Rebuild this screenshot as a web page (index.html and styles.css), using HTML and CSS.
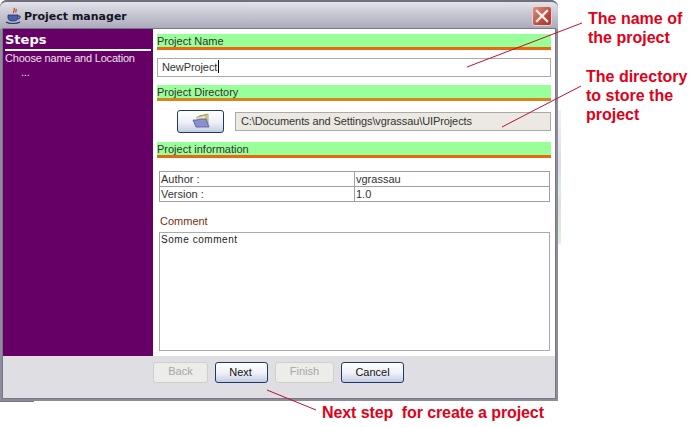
FILE: index.html
```html
<!DOCTYPE html>
<html lang="en">
<head>
<meta charset="UTF-8">
<meta name="viewport" content="width=device-width, initial-scale=1.0">
<title>Project manager</title>
<link rel="stylesheet" href="styles.css">
</head>
<body>

<div class="window">
    <div class="titlebar">
        <svg class="app-icon" width="18" height="18" viewBox="0 0 18 18">
            <path d="M9 1c2 2-2 3 0 5M11 2c1 1.500-1 2 0 3.500" fill="none" stroke="#c8431e" stroke-width="1.200"/>
            <path d="M3 8h10v3c0 2-2 3-5 3s-5-1-5-3z" fill="#4a5fa8" stroke="#27306b" stroke-width="0.800"/>
            <path d="M13 9h2v2l-2 1" fill="none" stroke="#27306b"/>
            <path d="M1 15c3 2 11 2 14 0" fill="none" stroke="#27306b" stroke-width="1.200"/>
        </svg>
        <span class="title">Project manager</span>
        <span class="close">
            <svg width="14" height="14" viewBox="0 0 14 14">
                <path d="M2 2l10 10M12 2L2 12" stroke="#fbeeea" stroke-width="2.400" stroke-linecap="square"/>
            </svg>
        </span>
    </div>

    <div class="frame">
        <div class="main">
            <div class="steps">
                <h3>Steps</h3>
                <p>Choose name and Location</p>
                <p class="dots">...</p>
            </div>

            <div class="content">
                <div class="section">Project Name</div>
                <div class="name-input">NewProject<span class="caret"></span></div>

                <div class="section section-amber">Project Directory</div>
                <div class="dir-row">
                    <span class="btn dir-btn">
                        <svg width="18" height="16" viewBox="0 0 18 16">
                            <path d="M7 3l9-2v10l-9 2z" fill="#f3e08a" stroke="#8f8650" stroke-width="0.700"/>
                            <path d="M5 4l9-2v10l-9 2z" fill="#efe6b8" stroke="#8f8650" stroke-width="0.700"/>
                            <path d="M1 7h5l1-1h7l3 8H4z" fill="#8a8fd0" stroke="#565c9c" stroke-width="0.800"/>
                        </svg>
                    </span>
                    <span class="dir-field">C:\Documents and Settings\vgrassau\UIProjects</span>
                </div>

                <div class="section">Project information</div>
                <table class="info">
                    <tr><td class="key">Author :</td><td>vgrassau</td></tr>
                    <tr><td class="key">Version :</td><td>1.0</td></tr>
                </table>

                <div class="comment-label">Comment</div>
                <div class="comment">Some comment</div>
            </div>
        </div>

        <div class="footer">
            <span class="btn off back">Back</span>
            <span class="btn next">Next</span>
            <span class="btn off finish">Finish</span>
            <span class="btn cancel">Cancel</span>
        </div>
    </div>
</div>

<!-- Bits of the window behind the dialog -->
<div class="behind-side"></div>
<div class="behind-bottom"></div>

<!-- Annotations drawn over the screenshot -->
<svg class="arrows" width="698" height="427">
    <line x1="467" y1="67" x2="582" y2="23"/>
    <line x1="502" y1="127" x2="581" y2="86"/>
    <line x1="267" y1="390" x2="316" y2="410"/>
</svg>
<div class="note note-name">The name of<br>the project</div>
<div class="note note-dir">The directory<br>to store the<br>project</div>
<div class="note note-next">Next step&nbsp; for create a project</div>

</body>
</html>
```

FILE: styles.css
```css
body {
    margin: 0;
    width: 698px;
    height: 427px;
    overflow: hidden;
    background-color: #fff;
    font-family: "Liberation Sans", Arial, sans-serif;
    font-size: 11px;
    color: #333;
}
.window {
    width: 558px;
    height: 401px;
    box-sizing: border-box;
    border-radius: 7px 7px 0 0;
    background-color: #8c8c9c;
    display: flex;
    flex-direction: column;
}
.titlebar {
    height: 29px;
    flex: none;
    box-sizing: border-box;
    padding: 1px 6px 0 5px;
    display: flex;
    align-items: center;
    gap: 1px;
    border-top: 2px solid #70707c;
    border-radius: 7px 7px 0 0;
    background: linear-gradient(#e4e4ea, #cdcdd8 35%, #a9a9ba);
}
.app-icon {
    flex: none;
}
.title {
    font-family: "DejaVu Sans", sans-serif;
    font-size: 11px;
    font-weight: bold;
    color: #14141e;
    flex: 1;
}
.close {
    width: 20px;
    height: 20px;
    border: 1px solid #e8d0cc;
    border-radius: 3px;
    box-sizing: border-box;
    background: linear-gradient(135deg, #dc9488, #bf4a40 60%, #a83a34);
    display: flex;
    align-items: center;
    justify-content: center;
}
.frame {
    flex: 1;
    margin: 0 3px 3px;
    display: flex;
    flex-direction: column;
    box-shadow: 0 0 0 1px #777785;
    background-color: #dfdfe3;
}
.main {
    height: 327px;
    display: flex;
}
.steps {
    width: 150px;
    flex: none;
    box-sizing: border-box;
    padding: 3px 2px 0;
    background-color: #660066;
    color: #e8e0e8;
    letter-spacing: -0.2px;
}
.steps h3 {
    margin: 0;
    padding-bottom: 2px;
    border-bottom: 2px solid #fff;
    font-family: "DejaVu Sans", sans-serif;
    font-size: 13px;
    line-height: 15px;
    letter-spacing: 0;
    color: #fff;
}
.steps p {
    margin: 0;
    line-height: 14px;
}
.steps .dots {
    padding-left: 16px;
}
.content {
    flex: 1;
    padding: 5px 4px 0;
    background-color: #fff;
}
.section {
    height: 13px;
    line-height: 15px;
    border-bottom: 3px solid #e86a10;
    background-color: #99ff99;
}
.section-amber {
    border-bottom-color: #d8861c;
}
.name-input {
    height: 17px;
    line-height: 17px;
    margin: 8px 0;
    padding-left: 4px;
    border: 1px solid #aaa;
    letter-spacing: -0.1px;
}
.caret {
    display: inline-block;
    width: 1px;
    height: 13px;
    margin-left: 1px;
    vertical-align: -2px;
    background-color: #000;
}
.dir-row {
    display: flex;
    align-items: center;
    gap: 11px;
    margin: 9px 0 9px 20px;
}
.btn {
    display: flex;
    align-items: center;
    justify-content: center;
    box-sizing: border-box;
    height: 21px;
    padding-bottom: 1px;
    border: 1px solid #1d3a60;
    border-radius: 3px;
    background: linear-gradient(#fff, #eef0f6 55%, #c4cce4);
    color: #111;
}
.dir-btn {
    width: 47px;
    height: 23px;
}
.dir-field {
    flex: 1;
    height: 19px;
    line-height: 17px;
    box-sizing: border-box;
    padding-left: 5px;
    border: 1px solid #aaa;
    background-color: #ebe9e1;
    letter-spacing: -0.1px;
}
.info {
    width: 391px;
    margin: 13px 0 0 2px;
    border-collapse: collapse;
}
.info td {
    height: 14px;
    padding: 0 1px;
    border: 1px solid #a0a0a0;
    line-height: 13px;
}
.info .key {
    width: 192px;
}
.comment-label {
    margin: 12px 0 4px 3px;
    line-height: 14px;
    color: #7a3010;
}
.comment {
    width: 391px;
    height: 119px;
    box-sizing: border-box;
    margin-left: 2px;
    padding: 0 1px;
    border: 1px solid #aaa;
    font-size: 10px;
    line-height: 14px;
    letter-spacing: 0.55px;
    color: #222;
}
.footer {
    flex: 1;
    display: flex;
    gap: 7px;
    padding: 6px 0 0 150px;
}
.off {
    padding-bottom: 3px;
    border-color: #cfcfcf;
    background: #ecece8;
    color: #a6a6a6;
}
.back {
    width: 55px;
}
.next {
    width: 53px;
    padding-right: 2px;
}
.finish {
    width: 59px;
}
.cancel {
    width: 63px;
}
.behind-side {
    position: absolute;
    left: 558px;
    top: 110px;
    width: 3px;
    height: 134px;
    background: linear-gradient(#f2f2f6, #dcdce6 40%, #d8f2d8 62%, #e0e0d8 70%, #d8f6d8);
}
.behind-bottom {
    position: absolute;
    left: 0;
    top: 401px;
    width: 34px;
    height: 1px;
    background-color: #777;
}
.arrows {
    position: absolute;
    left: 0;
    top: 0;
}
.arrows line {
    stroke: #c01030;
    stroke-width: 1;
}
.note {
    position: absolute;
    font-size: 16px;
    font-weight: bold;
    line-height: 19px;
    color: #e00018;
    white-space: nowrap;
}
.note-name {
    left: 588px;
    top: 9px;
}
.note-dir {
    left: 586px;
    top: 67px;
}
.note-next {
    left: 322px;
    top: 403px;
    letter-spacing: -0.1px;
}
```
